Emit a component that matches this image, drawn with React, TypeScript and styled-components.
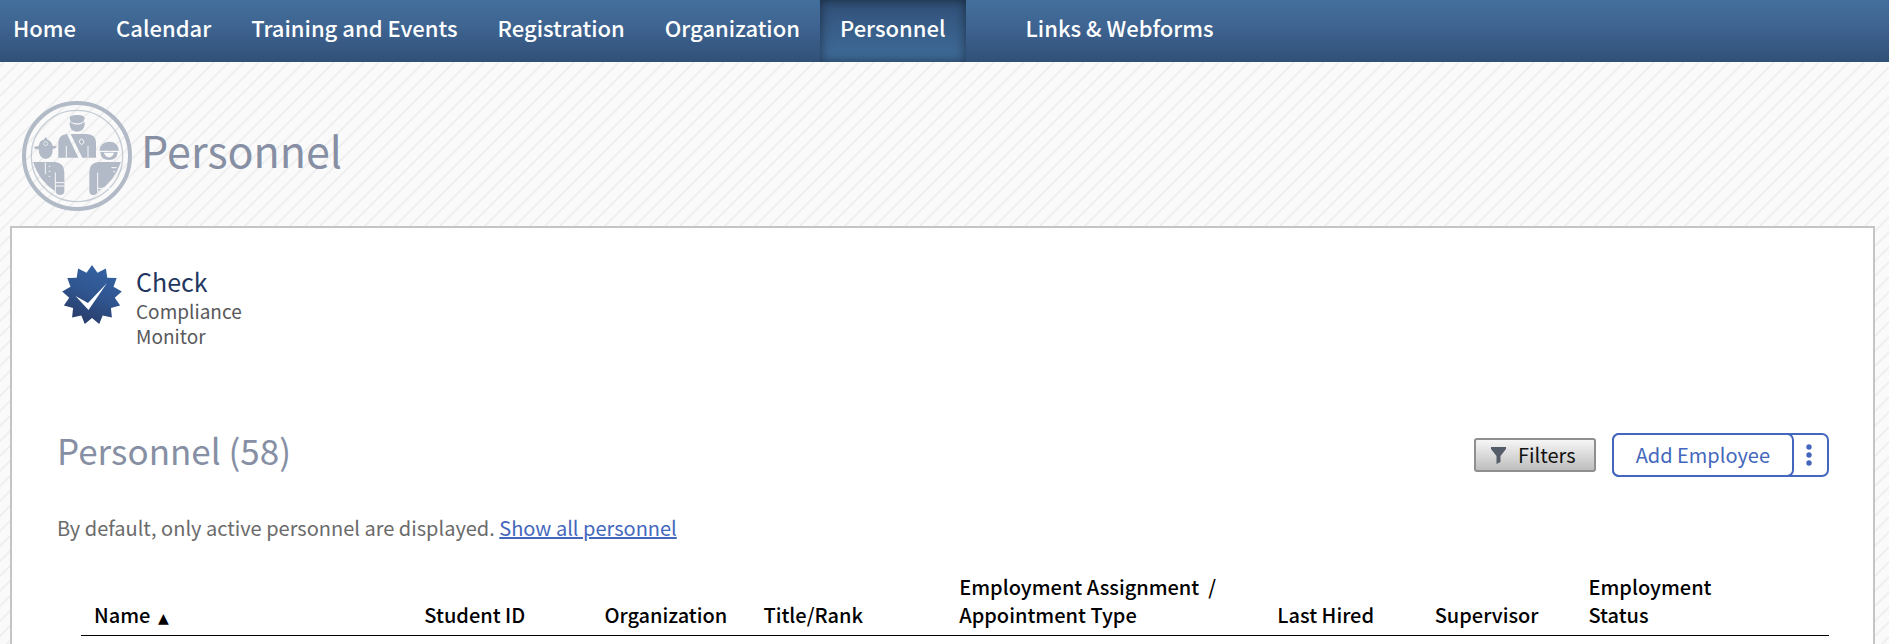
import React from "react";
import styled, { createGlobalStyle, css } from "styled-components";

const GlobalStyle = createGlobalStyle`
  * { box-sizing: border-box; }
  body {
    margin: 0;
    color: #5f6062;
    font-family: "Source Sans Pro", "Noto Sans CJK SC", "Noto Sans", sans-serif;
    font-size: 20px;
    line-height: 28px;
    background-color: #fafafa;
    background-image: linear-gradient(
      135deg,
      #efefef 3%,
      #fafafa 6%,
      #fafafa 44%,
      #efefef 47%,
      #efefef 53%,
      #fafafa 56%,
      #fafafa 94%,
      #efefef 97%
    );
    background-size: 15px 15px;
    background-position: 6px 0;
  }
`;

const NavBar = styled.nav`
  display: flex;
  height: 62px;
  background: linear-gradient(#436f9c, #3f6592 40%, #305078);
`;

const NavLink = styled.a<{ $active?: boolean; $first?: boolean; $spaced?: boolean }>`
  padding: 0 20px;
  padding-left: ${(p) => (p.$first ? "13px" : "20px")};
  margin-left: ${(p) => (p.$spaced ? "40px" : "0")};
  color: #fff;
  font-size: 22px;
  font-weight: 500;
  line-height: 54px;
  white-space: nowrap;
  text-decoration: none;
  ${(p) =>
    p.$active &&
    css`
      background: linear-gradient(#305078, #406d9b);
      box-shadow: inset 0 0 12px rgba(0, 0, 0, 0.5);
    `}
`;

const PageHeader = styled.header`
  display: flex;
  align-items: center;
  gap: 8px;
  height: 164px;
  padding: 24px 21px 0;
`;

const PageTitle = styled.h1`
  margin: 0;
  padding-bottom: 14px;
  color: #868fa3;
  font-size: 43px;
  font-weight: 400;
  line-height: 60px;
`;

const Panel = styled.main`
  margin: 0 14px 0 10px;
  padding: 36px 44px 0 45px;
  min-height: 418px;
  border: 2px solid #c4c4c4;
  border-bottom: 0;
  background: #fff;
`;

const Shortcut = styled.a`
  display: inline-flex;
  align-items: flex-start;
  gap: 14px;
  padding-left: 5px;
  color: #58595b;
  font-size: 19px;
  line-height: 25px;
  text-decoration: none;
`;

const ShortcutTitle = styled.strong`
  display: block;
  color: #1f3660;
  font-size: 25px;
  font-weight: 400;
  line-height: 34px;
`;

const ShortcutText = styled.span`
  display: block;
  width: 120px;
`;

const ListHeader = styled.div`
  display: flex;
  align-items: flex-end;
  justify-content: space-between;
  margin-top: 75px;
`;

const ListTitle = styled.h2`
  margin: 0;
  color: #868fa3;
  font-size: 35px;
  font-weight: 400;
  line-height: 54px;
`;

const Actions = styled.div`
  display: flex;
  align-items: center;
  gap: 16px;
`;

const FilterButton = styled.button`
  display: flex;
  align-items: center;
  gap: 12px;
  height: 34px;
  padding: 0 18px 0 15px;
  border: 2px solid #8f8f8f;
  border-radius: 3px;
  background: linear-gradient(#f6f6f6, #bebebe);
  color: #111;
  font: inherit;
`;

const SplitButton = styled.div`
  display: flex;
  height: 44px;
  border: 2px solid #4467bd;
  border-radius: 7px;
`;

const AddButton = styled.button`
  margin: -2px 0 -2px -2px;
  padding: 0 22px;
  border: 2px solid #4467bd;
  border-radius: 7px;
  background: #fff;
  color: #4467bd;
  font: inherit;
`;

const MoreButton = styled.button`
  display: flex;
  align-items: center;
  padding: 0 15px 0 12px;
  border: 0;
  background: none;
`;

const Note = styled.p`
  margin: 37px 0 0;
  color: #6b6b6b;
`;

const NoteLink = styled.a`
  color: #4467bd;
  text-decoration: underline;
`;

const Table = styled.table`
  width: calc(100% - 24px);
  margin: 27px 0 0 24px;
  border-collapse: collapse;
  table-layout: fixed;
  color: #000;
`;

const HeadCell = styled.th<{ $width: number }>`
  width: ${(p) => p.$width}%;
  padding: 4px 13px 6px;
  border-bottom: 1px solid #000;
  font-weight: 500;
  text-align: left;
  vertical-align: bottom;
  white-space: nowrap;
`;

const SortMark = styled.span`
  margin-left: 3px;
  font-family: "DejaVu Sans", sans-serif;
  font-size: 14px;
  line-height: 20px;
`;

const CrewLogo = () => (
  <svg width="112" height="110" viewBox="20 18 336 330" aria-hidden="true">
    <g fill="none" stroke="#b1bac6">
      <circle cx="188" cy="183" r="159" strokeWidth="12" />
      <circle cx="188" cy="183" r="137" strokeWidth="4" opacity="0.7" />
    </g>
    <g fill="#b1bac6">
      <path d="M166 70Q166 60 188 60T211 70L207 80Q188 90 169 80Z" />
      <path d="M166 80Q188 98 211 80V88Q209 110 188 110T166 88Z" />
      <path d="M132 188V142Q134 118 158 117L192 188Z" />
      <path d="M169 117H218Q244 118 245 142V188H204Z" />
      <path d="M59 158Q60 153 73 153Q75 137 88 134L94 126L100 134Q112 138 115 153H127Q127 159 115 162Q116 190 94 192Q73 190 73 163Q60 162 59 158Z" />
      <path d="M255 167Q258 141 284 140T314 167Z" />
      <path d="M258 171H310Q309 195 284 195T258 171Z" />
      <path d="M56 201H122Q149 203 150 232V290Q149 299 138 300Q126 299 124 290Q75 260 56 201Z" />
      <path d="M320 201H252Q225 203 225 232V290Q227 300 237 300Q247 299 250 290Q300 260 320 201Z" />
    </g>
    <g fill="none" stroke="#f9f9f9" strokeWidth="3">
      <path d="M156 153V188M221 153V188M93 203V237M103 214H108M103 229H108M103 244H108M123 232V290M124 263H150M124 273H150M250 233V290M250 280H290M291 218H307M296 230H302" />
      <circle cx="94" cy="146" r="6" strokeWidth="2" />
      <path d="M202 132Q194 134 195 143L202 149L209 143Q209 134 202 132Z" />
    </g>
    <path d="M268 173H300Q293 187 284 187T268 173Z" fill="#f9f9f9" />
  </svg>
);

const starPoints = Array.from({ length: 26 }, (_, i) => {
  const r = i % 2 ? 23 : 30;
  const a = (i * Math.PI) / 13 - Math.PI / 2;
  return `${(30 + r * Math.cos(a)).toFixed(1)},${(30 + r * Math.sin(a)).toFixed(1)}`;
}).join(" ");

const BadgeIcon = () => (
  <svg width="60" height="62" viewBox="0 -1 60 62" aria-hidden="true">
    <defs>
      <linearGradient id="badge" x1="0.7" y1="0" x2="0.3" y2="1">
        <stop offset="0" stopColor="#3463a3" />
        <stop offset="0.5" stopColor="#30558f" />
        <stop offset="1" stopColor="#283a66" />
      </linearGradient>
    </defs>
    <polygon points={starPoints} fill="url(#badge)" />
    <path d="M13.5 31L26 38L45 18L26.5 45Z" fill="#fff" />
  </svg>
);

const FunnelIcon = () => (
  <svg width="15" height="17" viewBox="0 0 15 17" aria-hidden="true">
    <path d="M0 0H15V2L9.5 9V15L5.5 17V9L0 2Z" fill="#545c69" />
  </svg>
);

const DotsIcon = () => (
  <svg width="6" height="22" viewBox="0 0 6 22" fill="#4467bd" aria-hidden="true">
    <circle cx="3" cy="3" r="2.7" />
    <circle cx="3" cy="11" r="2.7" />
    <circle cx="3" cy="19" r="2.7" />
  </svg>
);

const navItems = [
  "Home",
  "Calendar",
  "Training and Events",
  "Registration",
  "Organization",
  "Personnel",
  "Links & Webforms",
];

const columns: { label: React.ReactNode; width: number }[] = [
  { label: <>Name <SortMark>▲</SortMark></>, width: 18.9 },
  { label: "Student ID", width: 10.3 },
  { label: "Organization", width: 9.1 },
  { label: "Title/Rank", width: 11.2 },
  { label: <>Employment Assignment &nbsp;/<br />Appointment Type</>, width: 18.2 },
  { label: "Last Hired", width: 9 },
  { label: "Supervisor", width: 8.8 },
  { label: <>Employment<br />Status</>, width: 14.5 },
];

export default function App() {
  return (
    <>
      <GlobalStyle />
      <NavBar>
        {navItems.map((item, i) => (
          <NavLink
            key={item}
            href="#"
            $first={i === 0}
            $active={item === "Personnel"}
            $spaced={i === navItems.length - 1}
          >
            {item}
          </NavLink>
        ))}
      </NavBar>
      <PageHeader>
        <CrewLogo />
        <PageTitle>Personnel</PageTitle>
      </PageHeader>
      <Panel>
        <Shortcut href="#">
          <BadgeIcon />
          <ShortcutText>
            <ShortcutTitle>Check</ShortcutTitle>
            Compliance Monitor
          </ShortcutText>
        </Shortcut>
        <ListHeader>
          <ListTitle>Personnel (58)</ListTitle>
          <Actions>
            <FilterButton type="button">
              <FunnelIcon />
              Filters
            </FilterButton>
            <SplitButton>
              <AddButton type="button">Add Employee</AddButton>
              <MoreButton type="button" aria-label="More actions">
                <DotsIcon />
              </MoreButton>
            </SplitButton>
          </Actions>
        </ListHeader>
        <Note>
          By default, only active personnel are displayed.{" "}
          <NoteLink href="#">Show all personnel</NoteLink>
        </Note>
        <Table>
          <thead>
            <tr>
              {columns.map((c, i) => (
                <HeadCell key={i} scope="col" $width={c.width}>
                  {c.label}
                </HeadCell>
              ))}
            </tr>
          </thead>
        </Table>
      </Panel>
    </>
  );
}
